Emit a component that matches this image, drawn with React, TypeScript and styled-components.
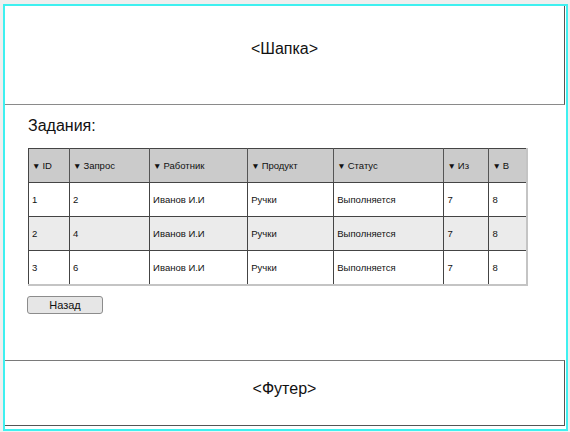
import styled, { createGlobalStyle } from "styled-components"

const GlobalStyle = createGlobalStyle`
  html, body {
    margin: 0;
    padding: 0;
    background: #efefef;
  }
  body {
    font-family: "Liberation Sans", Arial, sans-serif;
    color: #111;
  }
`

const Frame = styled.div`
  box-sizing: border-box;
  margin: 4px 2px 0 3px;
  height: 427px;
  border: 2px solid #3ff0f0;
  background: #fff;
  display: flex;
  flex-direction: column;
`

const Header = styled.header`
  box-sizing: border-box;
  height: 99px;
  margin-right: 1px;
  border-right: 1px solid #555;
  border-bottom: 1px solid #8a8a8a;
  display: flex;
  align-items: center;
  justify-content: center;
  padding-bottom: 12px;
  font-size: 16px;
`

const Footer = styled.footer`
  box-sizing: border-box;
  height: 66px;
  margin: auto 1px 3px 0;
  border-top: 1px solid #7a7a7a;
  border-right: 1px solid #555;
  border-bottom: 1px solid #555;
  display: flex;
  align-items: center;
  justify-content: center;
  padding-bottom: 9px;
  font-size: 16px;
`

const Content = styled.main`
  padding: 12px 0 0 23px;
  display: flex;
  flex-direction: column;
  align-items: flex-start;
`

const Title = styled.h2`
  margin: 0 0 13px;
  font-size: 16px;
  font-weight: normal;
  line-height: 18px;
`

const Grid = styled.table`
  border-collapse: collapse;
  table-layout: fixed;
  width: 500px;
  border-right: 2px solid #c4c4c4;
  border-bottom: 2px solid #c4c4c4;
  font-size: 9.5px;
`

const Row = styled.tr<{ $shade?: string }>`
  background: ${(p) => p.$shade || "#fff"};
`

const HeadCell = styled.th<{ $w: number }>`
  width: ${(p) => p.$w}px;
  height: 34px;
  padding: 0 0 0 3px;
  box-sizing: border-box;
  text-align: left;
  font-weight: normal;
  border: 1px solid #444;
  border-right-color: #555;
  white-space: nowrap;
`

const Cell = styled.td`
  height: 34px;
  padding: 0 0 0 3px;
  box-sizing: border-box;
  border-left: 1px solid #444;
  border-top: 1px solid #444;
  white-space: nowrap;
`

const Arrow = styled.span`
  font-size: 8.5px;
  margin-right: 2px;
`

const BackButton = styled.button`
  margin-top: 10px;
  margin-left: -1px;
  width: 76px;
  height: 18px;
  padding: 0;
  border: 1px solid #8c8c8c;
  border-radius: 3px;
  background: #e6e6e6;
  font-family: "Liberation Sans", Arial, sans-serif;
  font-size: 11px;
  color: #111;
`

const columns = [
  { label: "ID", w: 41 },
  { label: "Запрос", w: 80 },
  { label: "Работник", w: 98 },
  { label: "Продукт", w: 86 },
  { label: "Статус", w: 110 },
  { label: "Из", w: 45 },
  { label: "В", w: 38 },
]

const rows = [
  ["1", "2", "Иванов И.И", "Ручки", "Выполняется", "7", "8"],
  ["2", "4", "Иванов И.И", "Ручки", "Выполняется", "7", "8"],
  ["3", "6", "Иванов И.И", "Ручки", "Выполняется", "7", "8"],
]

export default function App() {
  return (
    <>
      <GlobalStyle />
      <Frame>
        <Header>&lt;Шапка&gt;</Header>
        <Content>
          <Title>Задания:</Title>
          <Grid>
            <thead>
              <Row $shade="#cbcbcb">
                {columns.map((c) => (
                  <HeadCell key={c.label} $w={c.w}>
                    <Arrow>▼</Arrow>
                    {c.label}
                  </HeadCell>
                ))}
              </Row>
            </thead>
            <tbody>
              {rows.map((r, i) => (
                <Row key={i} $shade={i % 2 === 1 ? "#ebebeb" : "#fff"}>
                  {r.map((v, j) => (
                    <Cell key={j}>{v}</Cell>
                  ))}
                </Row>
              ))}
            </tbody>
          </Grid>
          <BackButton>Назад</BackButton>
        </Content>
        <Footer>&lt;Футер&gt;</Footer>
      </Frame>
    </>
  )
}
